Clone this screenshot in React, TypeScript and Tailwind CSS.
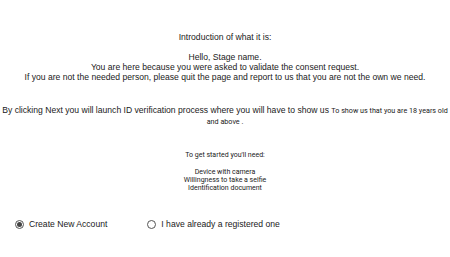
export default function App() {
  return (
    <div className="h-[257px] w-[450px] overflow-hidden bg-white text-[#1a1a1a] font-['Liberation_Sans',Arial,sans-serif]">
      <div className="flex flex-col items-center pt-[32px] text-center">
        <p className="text-[8.6px] leading-[10px]">Introduction of what it is:</p>
        <div className="mt-[10px] text-[8.6px] leading-[10px]">
          <p>Hello, Stage name.</p>
          <p>You are here because you were asked to validate the consent request.</p>
          <p>If you are not the needed person, please quit the page and report to us that you are not the own we need.</p>
        </div>
        <p className="mt-[23px] text-[8.6px] leading-[11px]">
          By clicking Next you will launch ID verification process where you will have to show us{" "}
          <span className="font-['Roboto',sans-serif] text-[7.2px]">To show us that you are 18 years old and above .</span>
        </p>
        <p className="mt-[24px] font-['Roboto',sans-serif] text-[7px] leading-[8px]">To get started you'll need:</p>
        <div className="mt-[9px] font-['Roboto',sans-serif] text-[7px] leading-[8px]">
          <p>Device with camera</p>
          <p>Willingness to take a selfie</p>
          <p>Identification document</p>
        </div>
      </div>
      <div className="mt-[26px] flex items-center pl-[15px] text-[8.6px]">
        <label className="flex items-center gap-[5px]">
          <span className="flex h-[9px] w-[9px] items-center justify-center rounded-full border border-[#555]">
            <span className="h-[5px] w-[5px] rounded-full bg-[#444]" />
          </span>
          Create New Account
        </label>
        <label className="ml-[40px] flex items-center gap-[5px]">
          <span className="h-[9px] w-[9px] rounded-full border border-[#555]" />
          I have already a registered one
        </label>
      </div>
    </div>
  );
}
